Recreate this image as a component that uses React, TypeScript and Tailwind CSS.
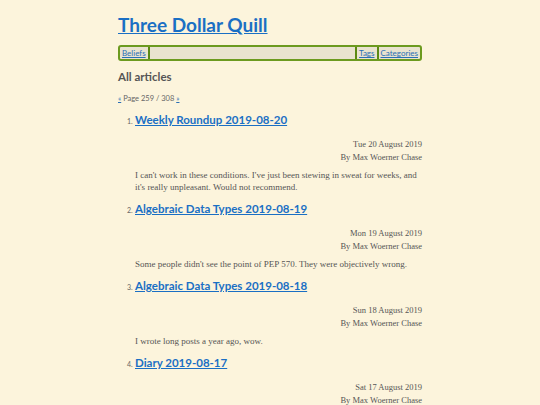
const articles = [
  {
    title: "Weekly Roundup 2019-08-20",
    date: "Tue 20 August 2019",
    excerpt:
      "I can't work in these conditions. I've just been stewing in sweat for weeks, and it's really unpleasant. Would not recommend.",
  },
  {
    title: "Algebraic Data Types 2019-08-19",
    date: "Mon 19 August 2019",
    excerpt: "Some people didn't see the point of PEP 570. They were objectively wrong.",
  },
  {
    title: "Algebraic Data Types 2019-08-18",
    date: "Sun 18 August 2019",
    excerpt: "I wrote long posts a year ago, wow.",
  },
  {
    title: "Diary 2019-08-17",
    date: "Sat 17 August 2019",
    excerpt: "",
  },
];

const sans = "font-['Lato','Open_Sans',sans-serif]";
const serif = "font-['Liberation_Serif','DejaVu_Serif',serif]";

export default function App() {
  return (
    <div className="min-h-[405px] bg-[#fcf4dc] text-[#4a4a4a]">
      <div className="mx-auto w-[304px] pt-[14px]">
        <h1 className={`${sans} text-[19px] font-bold leading-[22px]`}>
          <a href="#" className="text-[#1a6fc4] underline">
            Three Dollar Quill
          </a>
        </h1>

        <nav className={`${sans} mt-[9px] flex h-[16px] items-stretch rounded-[3px] border-2 border-[#6c9a1f] bg-[#e9e3cf] text-[8px]`}>
          <a href="#" className="flex items-center border-r-2 border-[#5b8a13] px-[2px] text-[#2a6fb5] underline">
            Beliefs
          </a>
          <div className="flex-1" />
          <a href="#" className="flex items-center border-l-2 border-r-2 border-[#5b8a13] px-[2px] text-[#2a6fb5] underline">
            Tags
          </a>
          <a href="#" className="flex items-center px-[2px] text-[#2a6fb5] underline">
            Categories
          </a>
        </nav>

        <h2 className={`${sans} mt-[8px] text-[11.5px] font-bold leading-[16px] text-[#555]`}>All articles</h2>

        <p className={`${sans} mt-[9px] text-[7.5px] leading-[10px] text-[#666]`}>
          <a href="#" className="text-[#2a6fb5] underline">«</a> Page 259 / 308{" "}
          <a href="#" className="text-[#2a6fb5] underline">»</a>
        </p>

        <ol className="mt-[7px] pl-[17px]">
          {articles.map((a, i) => (
            <li key={a.title} className="mb-[7px]">
              <div className="flex items-baseline">
                <span className={`${sans} -ml-[8px] w-[8px] text-[7px] text-[#666]`}>{i + 1}.</span>
                <a href="#" className={`${sans} text-[11.5px] font-bold leading-[18px] text-[#1a6fc4] underline`}>
                  {a.title}
                </a>
              </div>
              <div className={`${serif} mt-[9px] text-right text-[8.5px] leading-[12.5px] text-[#555]`}>
                <div>{a.date}</div>
                <div>By Max Woerner Chase</div>
              </div>
              {a.excerpt && (
                <p className={`${serif} mt-[6px] text-[9px] leading-[12px] text-[#555]`}>{a.excerpt}</p>
              )}
            </li>
          ))}
        </ol>
      </div>
    </div>
  );
}
